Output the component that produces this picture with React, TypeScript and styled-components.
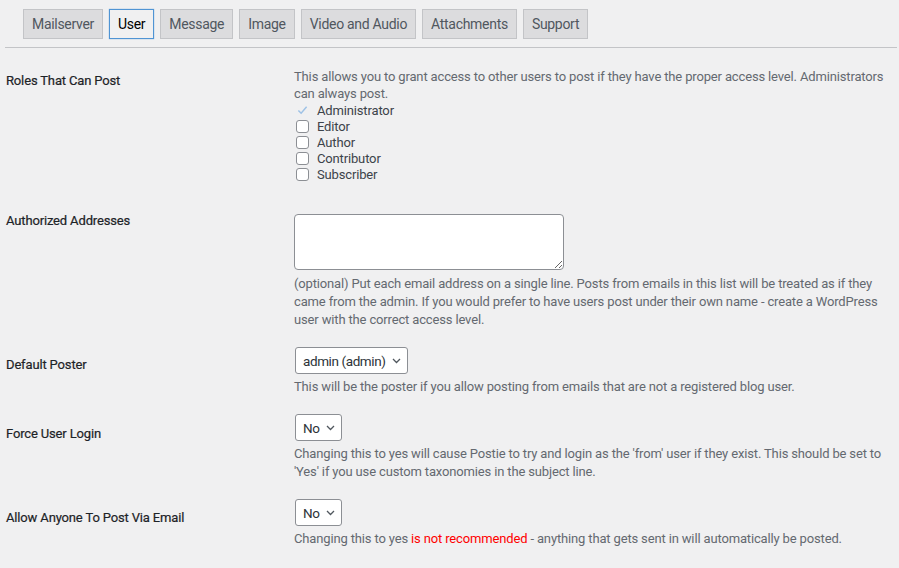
import styled, { createGlobalStyle } from "styled-components";

const GlobalStyle = createGlobalStyle`
  html, body {
    margin: 0;
    padding: 0;
    background: #f0f0f1;
  }
  body {
    font-family: "Segoe UI", Roboto, "Liberation Sans", sans-serif;
    font-size: 13px;
    letter-spacing: -0.15px;
    color: #1d2327;
  }
`;

const Wrap = styled.div`
  margin: 0 2px 0 5px;
`;

const TabBar = styled.nav`
  display: flex;
  gap: 6px;
  padding: 9px 0 8px 18px;
  border-bottom: 1px solid #c3c4c7;
`;

const Tab = styled.a<{ $active?: boolean }>`
  display: flex;
  align-items: center;
  height: 30px;
  box-sizing: border-box;
  padding: 0 8px;
  font-size: 14px;
  letter-spacing: -0.3px;
  text-decoration: none;
  cursor: pointer;
  border: 1px solid ${(p) => (p.$active ? "#4f94d4" : "#c3c4c7")};
  background: ${(p) => (p.$active ? "#f0f0f1" : "#dcdcde")};
  color: ${(p) => (p.$active ? "#000" : "#50575e")};
  box-shadow: ${(p) => (p.$active ? "0 0 1px 0 rgba(79,148,212,.8)" : "none")};
`;

const Form = styled.div`
  display: flex;
  flex-direction: column;
  gap: 18px;
  padding-top: 20px;
`;

const Row = styled.div<{ $after?: number }>`
  display: grid;
  grid-template-columns: 289px 596px;
  margin-bottom: ${(p) => p.$after ?? 0}px;
`;

const Label = styled.div<{ $offset: number }>`
  padding-left: 1px;
  margin-top: ${(p) => p.$offset}px;
  line-height: 17px;
  font-weight: 400;
  color: #1d2327;
  -webkit-text-stroke: 0.2px #1d2327;
`;

const Field = styled.div`
  display: flex;
  flex-direction: column;
  align-items: flex-start;
`;

const Description = styled.p<{ $lh?: number }>`
  margin: 0;
  color: #646970;
  line-height: ${(p) => p.$lh ?? 18}px;
`;

const Warn = styled.span`
  color: #ff0000;
`;

const CheckList = styled.div`
  display: flex;
  flex-direction: column;
`;

const CheckRow = styled.label`
  display: flex;
  align-items: center;
  gap: 8px;
  height: 16px;
  color: #3c434a;
  padding-left: 2px;
`;

const Box = styled.span<{ $disabled?: boolean }>`
  width: 13px;
  height: 13px;
  box-sizing: border-box;
  border-radius: 3px;
  border: 1px solid ${(p) => (p.$disabled ? "transparent" : "#8c8f94")};
  background: ${(p) => (p.$disabled ? "transparent" : "#fff")};
  display: flex;
  align-items: center;
  justify-content: center;
  flex: none;
`;

const TextArea = styled.textarea`
  width: 270px;
  height: 56px;
  box-sizing: border-box;
  border: 1px solid #8c8f94;
  border-radius: 4px;
  background: #fff;
  font: inherit;
  margin: 0 0 5px;
  display: block;
`;

const SelectBox = styled.div`
  position: relative;
  display: inline-flex;
  margin-bottom: 4px;
  margin-left: 1px;
`;

const Select = styled.select`
  appearance: none;
  height: 27px;
  box-sizing: border-box;
  border: 1px solid #8c8f94;
  border-radius: 3px;
  background: #fff;
  padding: 0 21px 0 7px;
  font-family: inherit;
  font-size: 13.5px;
  letter-spacing: -0.4px;
  color: #2c3338;
`;

const Chevron = styled.svg`
  position: absolute;
  right: 7px;
  top: 11px;
  pointer-events: none;
`;

function Dropdown({ value }: { value: string }) {
  return (
    <SelectBox>
      <Select defaultValue={value}>
        <option>{value}</option>
      </Select>
      <Chevron width="9" height="6" viewBox="0 0 9 6">
        <path d="M1 1l3.5 3.5L8 1" fill="none" stroke="#50575e" strokeWidth="1.3" />
      </Chevron>
    </SelectBox>
  );
}

const tabs = ["Mailserver", "User", "Message", "Image", "Video and Audio", "Attachments", "Support"];
const roles = ["Administrator", "Editor", "Author", "Contributor", "Subscriber"];

export default function App() {
  return (
    <>
      <GlobalStyle />
      <Wrap>
        <TabBar>
          {tabs.map((t) => (
            <Tab key={t} $active={t === "User"}>
              {t}
            </Tab>
          ))}
        </TabBar>
        <Form>
          <Row $after={14}>
            <Label $offset={4}>Roles That Can Post</Label>
            <Field>
              <Description $lh={17}>
                This allows you to grant access to other users to post if they have the proper access level. Administrators can always post.
              </Description>
              <CheckList>
                {roles.map((r, i) => (
                  <CheckRow key={r}>
                    <Box $disabled={i === 0}>
                      {i === 0 && (
                        <svg width="12" height="10" viewBox="0 0 12 10">
                          <path d="M1.5 5.5l3 3 6-7" fill="none" stroke="#9ec2e6" strokeWidth="1.6" />
                        </svg>
                      )}
                    </Box>
                    {r}
                  </CheckRow>
                ))}
              </CheckList>
            </Field>
          </Row>
          <Row>
            <Label $offset={-2}>Authorized Addresses</Label>
            <Field>
              <TextArea />
              <Description>
                (optional) Put each email address on a single line. Posts from emails in this list will be treated as if they came from the admin. If you would prefer to have users post under their own name - create a WordPress user with the correct access level.
              </Description>
            </Field>
          </Row>
          <Row>
            <Label $offset={9}>Default Poster</Label>
            <Field>
              <Dropdown value="admin (admin)" />
              <Description>This will be the poster if you allow posting from emails that are not a registered blog user.</Description>
            </Field>
          </Row>
          <Row>
            <Label $offset={11}>Force User Login</Label>
            <Field>
              <Dropdown value="No" />
              <Description>
                Changing this to yes will cause Postie to try and login as the 'from' user if they exist. This should be set to 'Yes' if you use custom taxonomies in the subject line.
              </Description>
            </Field>
          </Row>
          <Row>
            <Label $offset={10}>Allow Anyone To Post Via Email</Label>
            <Field>
              <Dropdown value="No" />
              <Description>
                Changing this to yes <Warn>is not recommended</Warn> - anything that gets sent in will automatically be posted.
              </Description>
            </Field>
          </Row>
        </Form>
      </Wrap>
    </>
  );
}
